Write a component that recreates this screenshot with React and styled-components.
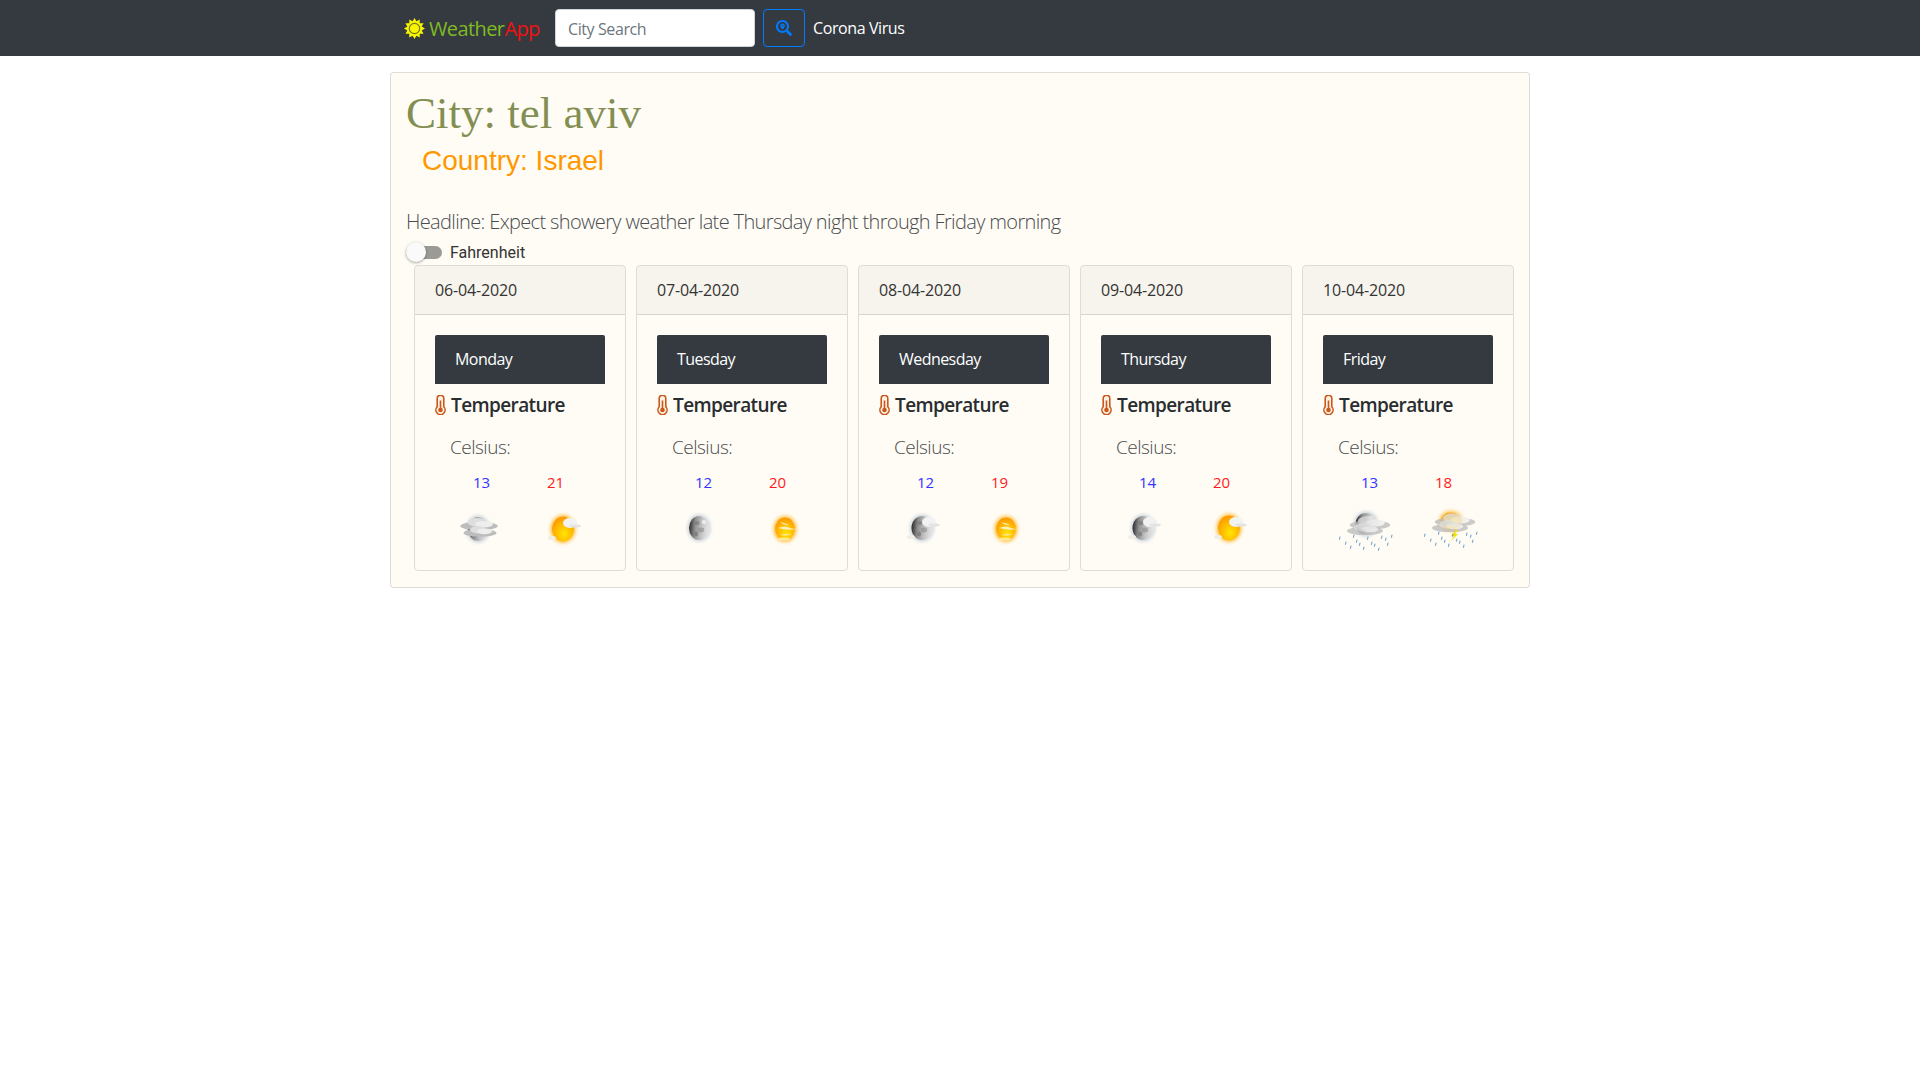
import React, { useId } from 'react';
import styled, { createGlobalStyle } from 'styled-components';
import { FaSearchLocation } from 'react-icons/fa';

const GlobalStyle = createGlobalStyle`
  body {
    margin: 0;
    background: #fff;
    font-family: "Open Sans", "Noto Sans", sans-serif;
    font-size: 16px;
    color: #212529;
  }
  * { box-sizing: border-box; }
`;

const Navbar = styled.nav`
  height: 56px;
  background: #343a40;
  display: flex;
  align-items: center;
  padding-left: 404px;
`;

const Brand = styled.div`
  display: flex;
  align-items: center;
  width: 151px;
  font-size: 20px;
  letter-spacing: -0.6px;
  color: #7fba22;
  svg { margin-right: 4px; }
  span { color: #f21111; }
`;

const SearchInput = styled.input`
  width: 200px;
  height: 38px;
  padding: 8px 12px 6px;
  border: 1px solid #ced4da;
  border-radius: 4px;
  background: #fff;
  font: 16px "Open Sans", sans-serif;
  letter-spacing: -0.4px;
  &::placeholder { color: #6c757d; opacity: 1; }
`;

const SearchButton = styled.button`
  width: 42px;
  height: 38px;
  margin-left: 8px;
  padding: 0;
  display: flex;
  align-items: center;
  justify-content: center;
  background: transparent;
  border: 1px solid #007bff;
  border-radius: 4px;
  color: #007bff;
  font-size: 16px;
`;

const NavLink = styled.a`
  margin-left: 8px;
  color: #fff;
  font-size: 16px;
  letter-spacing: -0.4px;
`;

const Panel = styled.main`
  width: 1140px;
  height: 516px;
  margin: 16px 0 0 390px;
  padding: 0 15px;
  background: #fffcf5;
  border: 1px solid rgba(0, 0, 0, 0.125);
  border-radius: 4px;
`;

const City = styled.h1`
  margin: 11px 0 0;
  font: 400 45px/58px "Liberation Serif", serif;
  color: #838f52;
`;

const Country = styled.h2`
  margin: 0 0 0 16px;
  font: 400 28px/38px "Liberation Sans", sans-serif;
  color: #ff9800;
`;

const Headline = styled.p`
  margin: 27px 0 0;
  font-size: 20px;
  font-weight: 300;
  line-height: 30px;
  letter-spacing: -0.64px;
  color: #4a4d50;
`;

const ToggleRow = styled.div`
  display: flex;
  align-items: center;
  height: 24px;
  margin-top: 3px;
  margin-bottom: 2px;
  font: 16px Roboto, sans-serif;
  color: #333;
`;

const Track = styled.span`
  position: relative;
  display: block;
  width: 36px;
  height: 13px;
  margin-right: 8px;
  border-radius: 7px;
  background: #9c9a97;
`;

const Thumb = styled.span`
  position: absolute;
  left: 0;
  top: -4px;
  width: 20px;
  height: 20px;
  border-radius: 50%;
  background: #fafafa;
  box-shadow: 0 1px 3px rgba(0, 0, 0, 0.35);
`;

const Deck = styled.div`
  display: flex;
  gap: 10px;
  padding-left: 8px;
  margin-top: -1px;
`;

const Card = styled.article`
  width: 212px;
  height: 306px;
  border: 1px solid rgba(0, 0, 0, 0.125);
  border-radius: 4px;
  overflow: hidden;
`;

const CardHeader = styled.header`
  height: 49px;
  padding: 12px 20px;
  font-size: 16px;
  line-height: 24px;
  letter-spacing: -0.16px;
  background: rgba(0, 0, 0, 0.03);
  border-bottom: 1px solid rgba(0, 0, 0, 0.125);
  color: #333;
`;

const CardBody = styled.div`
  padding: 20px;
`;

const Day = styled.div`
  height: 49px;
  padding: 12px 20px;
  font-size: 16px;
  line-height: 24px;
  letter-spacing: -0.55px;
  border-radius: 2px 2px 0 0;
  background: #343a40;
  color: #fff;
`;

const TempTitle = styled.h5`
  display: flex;
  align-items: center;
  height: 24px;
  margin: 9px 0 0;
  font-size: 19px;
  font-weight: 600;
  letter-spacing: -0.6px;
  color: #2a2d30;
  svg { margin-right: 5px; }
`;

const Scale = styled.div`
  margin: 16px 0 0 15px;
  font-size: 19px;
  font-weight: 300;
  line-height: 28px;
  letter-spacing: -0.5px;
  color: #4a4d50;
`;

const Numbers = styled.div`
  display: grid;
  grid-template-columns: 74px 74px;
  margin: 9px 0 0 38px;
  font-size: 15px;
  line-height: 24px;
`;

const Temp = styled.span`
  color: ${(p) => (p.$high ? '#ff1a1a' : '#3333ff')};
`;

const Icons = styled.div`
  display: flex;
  gap: 10px;
  margin: 12px 0 0 6px;
`;

function LogoSun() {
  const pts = [];
  for (let i = 0; i < 24; i++) {
    const r = i % 2 ? 7.4 : 10.5;
    const a = (i * Math.PI) / 12 - Math.PI / 2;
    pts.push(`${(10.5 + r * Math.cos(a)).toFixed(2)},${(10.5 + r * Math.sin(a)).toFixed(2)}`);
  }
  return (
    <svg width="21" height="21" viewBox="0 0 21 21">
      <polygon points={pts.join(' ')} fill="#f6f600" />
      <circle cx="10.5" cy="10.5" r="5.2" fill="#f6f600" stroke="#77772a" strokeWidth="1.2" />
    </svg>
  );
}

function Thermometer() {
  return (
    <svg width="11" height="20" viewBox="0 0 11 20">
      <path
        d="M2.2 11.4V3.2a3.3 3.3 0 0 1 6.6 0v8.2a4.6 4.6 0 1 1-6.6 0z"
        transform="translate(0 .4)"
        fill="#fff1e2"
        stroke="#c9581c"
        strokeWidth="1.6"
      />
      <circle cx="5.5" cy="15" r="2.3" fill="#c9581c" />
      <rect x="4.7" y="5.5" width="1.6" height="9" fill="#c9581c" />
    </svg>
  );
}

// the forecast pictures are soft little renders: blurred discs, clouds and rain
function Cloud({ x, y, s = 1, o = 1 }) {
  return (
    <g transform={`translate(${x} ${y}) scale(${s})`} opacity={o}>
      <ellipse cx="0" cy="0" rx="15" ry="3.4" fill="#bdbdbd" />
      <ellipse cx="-2" cy="-3" rx="7" ry="3.4" fill="#dedede" />
      <ellipse cx="4" cy="-1.5" rx="7" ry="2.6" fill="#eeeeee" />
    </g>
  );
}

function Rain({ x, y }) {
  const drops = [
    [0, 8], [8, 1], [14, 9], [22, 3], [29, 10], [36, 2], [42, 9], [-6, 3],
    [5, 12], [18, 13], [33, 14], [26, 8], [11, 6], [40, 4], [46, 1],
  ];
  return (
    <g transform={`translate(${x} ${y})`} stroke="#5f93c4" strokeWidth="1.1" strokeLinecap="round" opacity="0.8">
      {drops.map(([dx, dy]) => (
        <line key={`${dx}-${dy}`} x1={dx} y1={dy} x2={dx - 0.6} y2={dy + 2.4} />
      ))}
    </g>
  );
}

function WeatherIcon({ body, cx = 37, cy = 22, rx = 11.5, ry = 13, cloud, haze, rain, bolt }) {
  const id = useId();
  const isSun = body === 'sun';
  return (
    <svg width="75" height="45" viewBox="0 0 75 45">
      <defs>
        <radialGradient id={`${id}sun`} cx="0.55" cy="0.68" r="0.62">
          <stop offset="0" stopColor="#ffe600" />
          <stop offset="0.55" stopColor="#ffbc00" />
          <stop offset="1" stopColor="#fb9c00" />
        </radialGradient>
        <linearGradient id={`${id}moon`} x1="0" x2="1" y1="0.4" y2="0.5">
          <stop offset="0" stopColor="#2a2a2a" />
          <stop offset="0.3" stopColor="#8f8f8f" />
          <stop offset="0.65" stopColor="#c6c6c6" />
          <stop offset="1" stopColor="#e6e6e6" />
        </linearGradient>
        <filter id={`${id}soft`} x="-30%" y="-30%" width="160%" height="160%">
          <feGaussianBlur stdDeviation="0.75" />
        </filter>
        <filter id={`${id}glow`} x="-40%" y="-40%" width="180%" height="180%">
          <feGaussianBlur stdDeviation="1.6" />
        </filter>
      </defs>
      <ellipse
        cx={cx}
        cy={cy}
        rx={rx + 2}
        ry={ry + 2}
        fill={isSun ? '#ffd98a' : '#d5dde3'}
        filter={`url(#${id}glow)`}
      />
      <ellipse
        cx={cx}
        cy={cy}
        rx={rx}
        ry={ry}
        fill={`url(#${id}${isSun ? 'sun' : 'moon'})`}
        stroke={isSun ? '#ffcf78' : 'none'}
        strokeWidth="1.2"
        filter={`url(#${id}soft)`}
      />
      <g filter={`url(#${id}soft)`}>
        {!isSun && (
          <>
            <ellipse cx={cx - 2} cy={cy - 5} rx="2.6" ry="2" fill="#777" opacity="0.65" />
            <ellipse cx={cx + 2} cy={cy + 2} rx="3.2" ry="2.4" fill="#8d8d8d" opacity="0.6" />
            <ellipse cx={cx - 3} cy={cy + 6} rx="2.2" ry="2.4" fill="#6f6f6f" opacity="0.6" />
            <ellipse cx={cx + 5} cy={cy - 6} rx="2.4" ry="2" fill="#f1f1f1" opacity="0.8" />
          </>
        )}
        {haze && (
          <>
            <path d={`M${cx - 5} ${cy - 7}q5 1 9 3q-5 1 -9 -3z`} fill="#fff3cf" opacity="0.9" />
            <path d={`M${cx - 7} ${cy - 1}q8 -3 12 0q3 1 7 1q-10 2 -19 -1z`} fill="#fff3cf" opacity="0.9" />
            <path d={`M${cx - 5} ${cy + 6}q6 -2 12 -1q-6 3 -12 1z`} fill="#ffe9a8" opacity="0.8" />
            <ellipse cx={cx - 1} cy={cy + 10} rx="6" ry="1.6" fill="#fff1b0" opacity="0.8" />
          </>
        )}
        {cloud === 'corner' && (
          <>
            <ellipse cx={cx + 7} cy={cy - 6} rx="7" ry="5" fill="#f2f2f2" />
            <ellipse cx={cx + 12} cy={cy - 3} rx="6" ry="1.6" fill="#e4e4e4" />
            <ellipse cx={cx - 11} cy={cy + 9} rx="4" ry="2" fill="#f0efe6" />
          </>
        )}
        {cloud === 'wide' && (
          <>
            <Cloud x={cx + 1} y={cy - 3} s={1.25} />
            <Cloud x={cx + 2} y={cy + 4} s={1.1} />
          </>
        )}
        {cloud === 'storm' && (
          <>
            <Cloud x={cx + 4} y={cy + 1} s={1.35} o={0.8} />
            <Cloud x={cx - 1} y={cy + 7} s={1.2} o={0.8} />
          </>
        )}
      </g>
      {bolt && <path d="M42 24l-5 6h3l-3 5 7-7h-3l3-4z" fill="#f4e000" />}
      {rain && (
        <g filter={`url(#${id}soft)`}>
          <Rain x={cx - 20} y={cy + 10} />
        </g>
      )}
    </svg>
  );
}

const forecast = [
  {
    date: '06-04-2020', day: 'Monday', low: 13, high: 21,
    night: { body: 'moon', cx: 37, cy: 23, rx: 10, ry: 12, cloud: 'wide' },
    noon: { body: 'sun', cx: 37, cy: 23, cloud: 'corner' },
  },
  {
    date: '07-04-2020', day: 'Tuesday', low: 12, high: 20,
    night: { body: 'moon', cx: 36, cy: 22, rx: 10, ry: 12 },
    noon: { body: 'sun', cx: 37, cy: 23, rx: 10.5, ry: 12, haze: true },
  },
  {
    date: '08-04-2020', day: 'Wednesday', low: 12, high: 19,
    night: { body: 'moon', cx: 37, cy: 22, rx: 10.5, ry: 12, cloud: 'corner' },
    noon: { body: 'sun', cx: 36, cy: 23, rx: 10.5, ry: 12, haze: true },
  },
  {
    date: '09-04-2020', day: 'Thursday', low: 14, high: 20,
    night: { body: 'moon', cx: 36, cy: 22, rx: 10.5, ry: 12, cloud: 'corner' },
    noon: { body: 'sun', cx: 37, cy: 22, cloud: 'corner' },
  },
  {
    date: '10-04-2020', day: 'Friday', low: 13, high: 18,
    night: { body: 'moon', cx: 37, cy: 18, rx: 10.5, ry: 11, cloud: 'storm', rain: true },
    noon: { body: 'sun', cx: 37, cy: 15, rx: 10.5, ry: 9, cloud: 'storm', rain: true, bolt: true },
  },
];

function ForecastCard({ item }) {
  return (
    <Card>
      <CardHeader>{item.date}</CardHeader>
      <CardBody>
        <Day>{item.day}</Day>
        <TempTitle>
          <Thermometer />
          Temperature
        </TempTitle>
        <Scale>Celsius:</Scale>
        <Numbers>
          <Temp>{item.low}</Temp>
          <Temp $high>{item.high}</Temp>
        </Numbers>
        <Icons>
          <WeatherIcon {...item.night} />
          <WeatherIcon {...item.noon} />
        </Icons>
      </CardBody>
    </Card>
  );
}

export default function App() {
  return (
    <>
      <GlobalStyle />
      <Navbar>
        <Brand>
          <LogoSun />
          <div>
            Weather<span>App</span>
          </div>
        </Brand>
        <SearchInput placeholder="City Search" />
        <SearchButton>
          <FaSearchLocation />
        </SearchButton>
        <NavLink>Corona Virus</NavLink>
      </Navbar>
      <Panel>
        <City>City: tel aviv</City>
        <Country>Country: Israel</Country>
        <Headline>Headline: Expect showery weather late Thursday night through Friday morning</Headline>
        <ToggleRow>
          <Track>
            <Thumb />
          </Track>
          Fahrenheit
        </ToggleRow>
        <Deck>
          {forecast.map((item) => (
            <ForecastCard key={item.date} item={item} />
          ))}
        </Deck>
      </Panel>
    </>
  );
}
